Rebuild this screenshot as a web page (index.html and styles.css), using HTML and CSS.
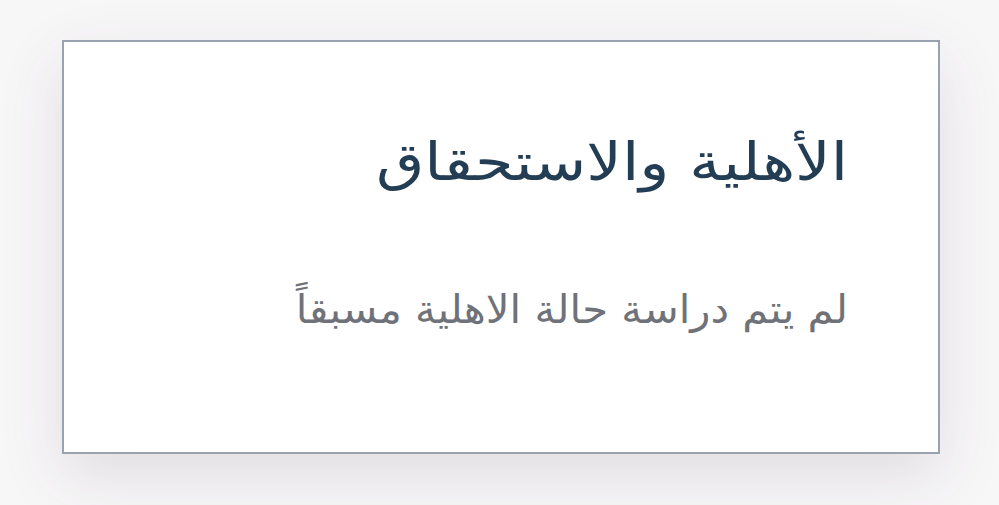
FILE: index.html
```html
<!DOCTYPE html>
<html lang="ar" dir="rtl">
<head>
<meta charset="utf-8">
<link rel="stylesheet" href="styles.css">
</head>
<body>
<main class="page">
  <section class="card">
    <h1 class="title">الأهلية والاستحقاق</h1>
    <p class="subtitle">لم يتم دراسة حالة الاهلية مسبقاً</p>
  </section>
</main>
</body>
</html>
```
FILE: styles.css
```css
html, body {
  margin: 0;
  padding: 0;
}
body {
  width: 999px;
  height: 505px;
  background: #f8f7f8;
  font-family: "DejaVu Sans", sans-serif;
  overflow: hidden;
}
.page {
  padding: 40px 59px 0 62px;
}
.card {
  box-sizing: border-box;
  width: 878px;
  height: 414px;
  background: #fff;
  border: 2px solid #9aa2b1;
  box-shadow: 0 22px 60px rgba(60, 50, 70, 0.13);
  padding: 90px 90px 0 90px;
  display: flex;
  flex-direction: column;
}
.title {
  margin: 0;
  font-weight: 400;
  font-size: 52px;
  line-height: 60px;
  color: #233d55;
  transform: scaleX(1.2);
  transform-origin: right center;
}
.subtitle {
  margin: 96px 0 0 0;
  font-weight: 400;
  font-size: 39px;
  line-height: 44px;
  color: #6f7278;
  transform: scaleX(1.07);
  transform-origin: right center;
}
```
